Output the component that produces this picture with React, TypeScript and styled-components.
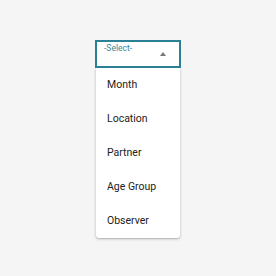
import React from 'react';
import styled, { createGlobalStyle } from 'styled-components';

const GlobalStyle = createGlobalStyle`
  html, body {
    margin: 0;
    padding: 0;
    background: #f5f5f5;
    font-family: Roboto, "Liberation Sans", sans-serif;
  }
`;

const Page = styled.div`
  width: 276px;
  height: 276px;
  display: flex;
  justify-content: center;
  padding-top: 40px;
  box-sizing: border-box;
`;

const Dropdown = styled.div`
  width: 86px;
  display: flex;
  flex-direction: column;
  align-items: center;
`;

const SelectBox = styled.div`
  width: 86px;
  height: 28px;
  box-sizing: border-box;
  border: 2px solid #2a8094;
  background: #fff;
  position: relative;
  padding: 1px 0 0 7px;
  font-size: 8.5px;
  line-height: 10px;
  color: #3a8799;
`;

const Arrow = styled.span`
  position: absolute;
  right: 13px;
  top: 10px;
  width: 0;
  height: 0;
  border-left: 3.5px solid transparent;
  border-right: 3.5px solid transparent;
  border-bottom: 4px solid #777;
`;

const Menu = styled.ul`
  list-style: none;
  margin: 0;
  padding: 0;
  width: 84px;
  background: #fff;
  border-radius: 0 0 3px 3px;
  box-shadow: 0 1px 3px rgba(0, 0, 0, 0.25), 0 1px 1px rgba(0, 0, 0, 0.08);
`;

const Item = styled.li`
  height: 34px;
  box-sizing: border-box;
  padding: 0 0 2px 11px;
  display: flex;
  align-items: center;
  font-size: 10.5px;
  color: #222;
`;

const options = ['Month', 'Location', 'Partner', 'Age Group', 'Observer'];

export default function App() {
  return (
    <>
      <GlobalStyle />
      <Page>
        <Dropdown>
          <SelectBox>
            -Select-
            <Arrow />
          </SelectBox>
          <Menu>
            {options.map((o) => (
              <Item key={o}>{o}</Item>
            ))}
          </Menu>
        </Dropdown>
      </Page>
    </>
  );
}
